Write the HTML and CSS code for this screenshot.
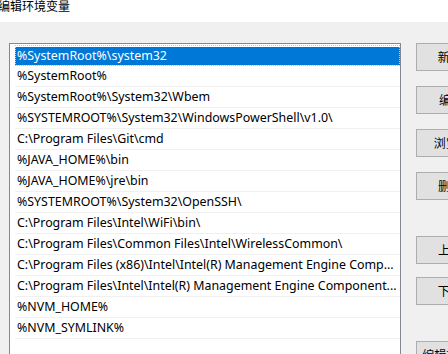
FILE: index.html
```html
<!DOCTYPE html>
<html lang="zh-CN">

<head>
    <meta charset="UTF-8">
    <meta name="viewport" content="width=device-width, initial-scale=1.0">
    <title>编辑环境变量</title>
    <link rel="stylesheet" href="styles.css">
</head>

<body>
    <div class="titlebar">
        <span class="title">编辑环境变量</span>
    </div>
    <div class="dialog">
        <ul class="path-list">
            <li class="selected">%SystemRoot%\system32</li>
            <li>%SystemRoot%</li>
            <li>%SystemRoot%\System32\Wbem</li>
            <li>%SYSTEMROOT%\System32\WindowsPowerShell\v1.0\</li>
            <li>C:\Program Files\Git\cmd</li>
            <li>%JAVA_HOME%\bin</li>
            <li>%JAVA_HOME%\jre\bin</li>
            <li>%SYSTEMROOT%\System32\OpenSSH\</li>
            <li>C:\Program Files\Intel\WiFi\bin\</li>
            <li>C:\Program Files\Common Files\Intel\WirelessCommon\</li>
            <li>C:\Program Files (x86)\Intel\Intel(R) Management Engine Comp...</li>
            <li>C:\Program Files\Intel\Intel(R) Management Engine Component...</li>
            <li>%NVM_HOME%</li>
            <li>%NVM_SYMLINK%</li>
            <li class="empty"></li>
        </ul>
        <div class="actions">
            <button>新建(N)</button>
            <button>编辑(E)</button>
            <button>浏览(B)...</button>
            <button>删除(D)</button>
            <button class="gap">上移(U)</button>
            <button class="tight">下移(O)</button>
            <button class="gap">编辑文本(T)...</button>
        </div>
    </div>
</body>

</html>
```

FILE: styles.css
```css
* {
    box-sizing: border-box;
}

html,
body {
    margin: 0;
    height: 100%;
    overflow: hidden;
}

body {
    background: #f0f0f0;
    color: #000;
    font-family: "Noto Sans", "Noto Sans CJK SC", sans-serif;
    font-size: 12px;
}

.titlebar {
    height: 22px;
    background: #fff;
    line-height: 14px;
}

.titlebar .title {
    display: block;
    margin-left: -2px;
    white-space: nowrap;
}

.dialog {
    display: flex;
    align-items: flex-start;
    padding: 21px 0 0 9px;
}

.path-list {
    margin: 0;
    padding: 1px 0 40px 0;
    list-style: none;
    width: 392px;
    flex: none;
    background: #fff;
    border: 1px solid #828790;
    font-size: 12.4px;
}

.path-list li {
    height: 21px;
    line-height: 20px;
    margin-left: 5px;
    padding-left: 2px;
    border-bottom: 1px solid #f0f0f0;
    white-space: nowrap;
    overflow: hidden;
}

.path-list li.selected {
    height: 21px;
    border-top: 2px solid #fff;
    line-height: 18px;
    background: #0078d7;
    color: #fff;
    outline: 1px dotted #a8d0f0;
    outline-offset: -1px;
}

.actions {
    display: flex;
    flex-direction: column;
    gap: 15px;
    margin-left: 15px;
    flex: none;
}

.actions button {
    width: 84px;
    height: 28px;
    padding: 0;
    font-family: inherit;
    font-size: 12px;
    color: #000;
    background: #e1e1e1;
    border: 1px solid #adadad;
    white-space: nowrap;
}

.actions button.gap {
    margin-top: 21px;
}

.actions button.tight {
    margin-top: -2px;
}
```
